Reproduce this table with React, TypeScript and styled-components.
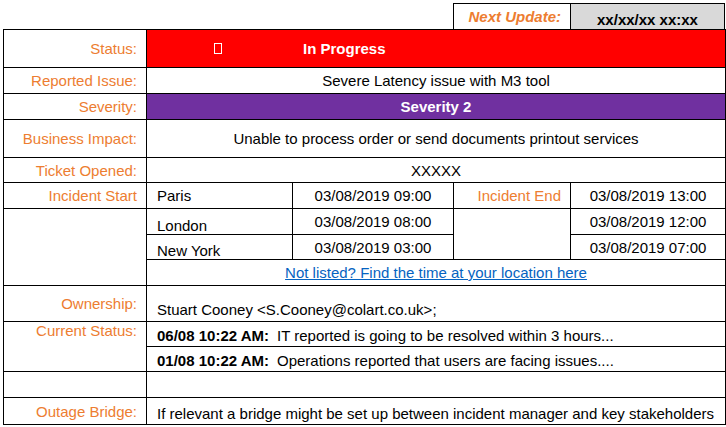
import styled, {createGlobalStyle} from "styled-components";

const GlobalStyle = createGlobalStyle`
  body {
    margin: 0;
    background: #FFFFFF;
    font-family: "Liberation Sans", Arial, sans-serif;
    font-size: 15px;
    color: #000000;
  }
`

const Page = styled.div`
  width: 722px;
  padding: 3px 0 0 3px;
`

const TopBar = styled.div`
  display: flex;
  justify-content: flex-end;
  height: 26px;
`

const NextLabel = styled.div`
  width: 117px;
  box-sizing: border-box;
  border: 1px solid #000;
  border-bottom: none;
  border-right: none;
  color: #ed7d31;
  font-weight: bold;
  font-style: italic;
  text-align: right;
  padding: 4px 9px 0 0;
`

const NextValue = styled.div`
  width: 155px;
  box-sizing: border-box;
  border: 1px solid #000;
  border-bottom: none;
  background: #d9d9d9;
  font-weight: bold;
  text-align: center;
  padding-top: 7px;
`

const Table = styled.table`
  border-collapse: collapse;
  table-layout: fixed;
  width: 722px;
`

const Label = styled.td<{ $align?: string }>`
  border: 1px solid #000;
  color: #ed7d31;
  text-align: right;
  padding: 0 9px 0 0;
  vertical-align: ${p => p.$align || "middle"};
  white-space: nowrap;
`

const Cell = styled.td<{ $center?: boolean; $align?: string; $bg?: string }>`
  border: 1px solid #000;
  padding: 0 0 0 ${p => p.$center ? 0 : 10}px;
  text-align: ${p => p.$center ? "center" : "left"};
  vertical-align: ${p => p.$align || "middle"};
  background: ${p => p.$bg || "transparent"};
  white-space: nowrap;
`

const Banner = styled.td<{ $bg: string }>`
  border: 1px solid #000;
  background: ${p => p.$bg};
  color: #FFFFFF;
  font-weight: bold;
  padding: 0;
`

const StatusLine = styled.div`
  display: flex;
  align-items: center;
`

const IconSlot = styled.div`
  width: 146px;
  display: flex;
  justify-content: center;
`

const Tofu = styled.span`
  display: block;
  width: 6px;
  height: 9px;
  border: 1px solid #FFFFFF;
  margin-left: -4px;
`

const StatusText = styled.span`
  padding-left: 10px;
`

const Link = styled.a`
  color: #0563c1;
  text-decoration: underline;
`

const Stamp = styled.b`
  margin-right: 8px;
`

const Row = styled.tr<{ $h: number }>`
  height: ${p => p.$h}px;
`

export default function App() {
    return <Page>
        <GlobalStyle/>
        <TopBar>
            <NextLabel>Next Update:</NextLabel>
            <NextValue>xx/xx/xx xx:xx</NextValue>
        </TopBar>
        <Table>
            <colgroup>
                <col style={{width: 143}}/>
                <col style={{width: 146}}/>
                <col style={{width: 161}}/>
                <col style={{width: 117}}/>
                <col style={{width: 155}}/>
            </colgroup>
            <tbody>
            <Row $h={38}>
                <Label>Status:</Label>
                <Banner colSpan={4} $bg="#ff0000">
                    <StatusLine>
                        <IconSlot><Tofu/></IconSlot>
                        <StatusText>In Progress</StatusText>
                    </StatusLine>
                </Banner>
            </Row>
            <Row $h={26}>
                <Label>Reported Issue:</Label>
                <Cell colSpan={4} $center>Severe Latency issue with M3 tool</Cell>
            </Row>
            <Row $h={26}>
                <Label>Severity:</Label>
                <Banner colSpan={4} $bg="#7030a0" style={{textAlign: "center"}}>Severity 2</Banner>
            </Row>
            <Row $h={38}>
                <Label>Business Impact:</Label>
                <Cell colSpan={4} $center>Unable to process order or send documents printout services</Cell>
            </Row>
            <Row $h={25}>
                <Label>Ticket Opened:</Label>
                <Cell colSpan={4} $center>XXXXX</Cell>
            </Row>
            <Row $h={26}>
                <Label>Incident Start</Label>
                <Cell>Paris</Cell>
                <Cell $center>03/08/2019 09:00</Cell>
                <Label>Incident End</Label>
                <Cell $center>03/08/2019 13:00</Cell>
            </Row>
            <Row $h={26}>
                <Label rowSpan={3}/>
                <Cell $align="bottom">London</Cell>
                <Cell $center>03/08/2019 08:00</Cell>
                <Cell rowSpan={2}/>
                <Cell $center>03/08/2019 12:00</Cell>
            </Row>
            <Row $h={25}>
                <Cell $align="bottom">New York</Cell>
                <Cell $center>03/08/2019 03:00</Cell>
                <Cell $center>03/08/2019 07:00</Cell>
            </Row>
            <Row $h={26}>
                <Cell colSpan={4} $center>
                    <Link href="#">Not listed? Find the time at your location here</Link>
                </Cell>
            </Row>
            <Row $h={36}>
                <Label>Ownership:</Label>
                <Cell colSpan={4} $align="bottom" style={{paddingBottom: 3}}>
                    Stuart Cooney &lt;S.Cooney@colart.co.uk&gt;;
                </Cell>
            </Row>
            <Row $h={25}>
                <Label rowSpan={2} $align="top">Current Status:</Label>
                <Cell colSpan={4} $align="bottom" style={{paddingBottom: 2}}>
                    <Stamp>06/08 10:22 AM:</Stamp>IT reported is going to be resolved within 3 hours...
                </Cell>
            </Row>
            <Row $h={25}>
                <Cell colSpan={4} $align="bottom" style={{paddingBottom: 2}}>
                    <Stamp>01/08 10:22 AM:</Stamp>Operations reported that users are facing issues....
                </Cell>
            </Row>
            <Row $h={26}>
                <Label/>
                <Cell colSpan={4}/>
            </Row>
            <Row $h={27}>
                <Label>Outage Bridge:</Label>
                <Cell colSpan={4} $align="bottom" style={{paddingBottom: 2}}>
                    If relevant a bridge might be set up between incident manager and key stakeholders
                </Cell>
            </Row>
            </tbody>
        </Table>
    </Page>
}
